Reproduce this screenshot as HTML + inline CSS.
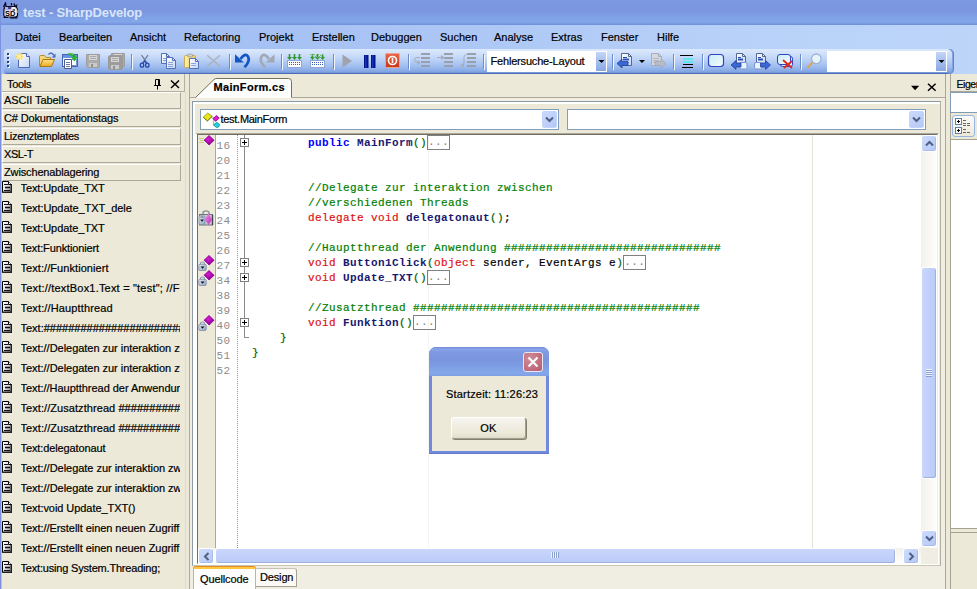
<!DOCTYPE html>
<html lang="de">
<head>
<meta charset="utf-8">
<title>test - SharpDevelop</title>
<style>
*{box-sizing:border-box;margin:0;padding:0}
html,body{width:977px;height:589px;overflow:hidden;background:#ECE9D8}
body{position:relative;font-family:"Liberation Sans",sans-serif;font-size:11px;color:#000;-webkit-text-stroke:.2px #000}
#title .cap,.ln,.cl b,.fm{-webkit-text-stroke:0}
.cl{-webkit-text-stroke:.2px #000}.cl .g{-webkit-text-stroke:.2px #008000}.cl .r{-webkit-text-stroke:.2px #E01010}.cl .p{-webkit-text-stroke:.2px #006400}
.abs{position:absolute}
#title{left:0;top:0;width:977px;height:25px;background:linear-gradient(#7C98E1 0,#7A96DF 45%,#7E9FE5 65%,#83A7EA 86%,#7A9AE2 94%,#6E8ED8 100%)}
#title .cap{left:23px;top:5px;font-weight:bold;font-size:13px;color:#D9E5F9;letter-spacing:-.16px;white-space:nowrap}
#menu{left:0;top:25px;width:977px;height:24px;background:linear-gradient(90deg,#9DB9F0 0,#A8C3F4 35%,#B8D1F8 75%,#BDD5F9 100%)}
#menu span{position:absolute;top:6px;white-space:nowrap;font-size:11px;letter-spacing:0}
#tbbg{left:0;top:49px;width:977px;height:25px;background:linear-gradient(90deg,#9DB9F0 0,#A8C3F4 35%,#B8D1F8 75%,#BDD5F9 100%)}
#tb{left:4px;top:49px;width:950px;height:25px;border-radius:4px 5px 5px 3px;box-shadow:inset -1px 0 0 #5E82CC,inset -2px 0 0 #86A6E2;background:linear-gradient(#DCE9FC 0,#CBDDF9 25%,#B6CEF5 48%,#9DBBEE 72%,#84A6E2 90%,#7396DA 95%,#4A6DBA 96%,#4A6DBA 100%)}
.lb{left:0;top:0;width:1px;height:589px;background:#7B91DB}
.lb2{left:1px;top:74px;width:1px;height:515px;background:#BCC2DD}
/* left panel */
#lp{left:2px;top:75px;width:183px;height:514px;background:#ECE9D8}
#lph{left:2px;top:74px;width:183px;height:18px;border:1px solid #B3B09F;border-left:0;border-top:0;background:#ECE9D8}
.sbtn{left:2px;width:179px;height:17px;background:#ECE9D8;border:1px solid;border-color:#FFFFFF #ACA899 #ACA899 #FFFFFF;font-size:11px;padding:1px 0 0 1px;white-space:nowrap}
.li{left:20.5px;white-space:nowrap;font-size:11px;letter-spacing:0;width:159.5px;overflow:hidden;height:14px;line-height:14px}
.lic{left:2px;width:10px;height:12px}

/* doc */
#docL{left:189px;top:74px;width:1px;height:515px;background:#ACA899}
#docR{left:945px;top:74px;width:1px;height:515px;background:#ACA899}
#docT{left:189px;top:97px;width:757px;height:1px;background:#ACA899}
#docbg{left:190px;top:98px;width:755px;height:491px;background:#F0EEE3}
#inner{left:192px;top:101px;width:749px;height:465px;border:1px solid;border-color:#8E9CA8 #B3B0A0 #C9C6B6 #8E9CA8;background:#ECE9D8;box-shadow:inset 1px 1px 0 1px #fff}
.combo{top:109px;height:21px;border:1px solid #7F9DB9;background:#fff}
.cbtn{top:1px;right:1px;width:15px;height:17px;border-radius:2px;background:linear-gradient(135deg,#CBDAFC,#B4C8F6);border:1px solid #C3D3FB}
#ed{left:195px;top:133px;width:744px;height:432px;border:1px solid;border-color:#ACA899 #fff #fff #fff;border-left-width:2px;background:#fff}
#ed2{left:197px;top:134px;width:741px;height:430px;border:1px solid;border-color:#716F64 #F1EFE2 #F1EFE2 #716F64;background:#fff;overflow:hidden}
#im{left:198px;top:135px;width:17px;height:413px;background:#ECE9D8}
#iml{left:215px;top:135px;width:1px;height:413px;background:#ACA899}
.ln{left:216.5px;font-family:"Liberation Mono",monospace;font-size:11px;letter-spacing:.4px;color:#8C8C8C;line-height:15px;height:15px;white-space:pre}
.cl{left:252px;font-family:"Liberation Mono",monospace;font-size:11px;letter-spacing:.4px;line-height:15px;height:15px;white-space:pre;color:#000}
.cl b{font-weight:bold}
.k{color:#0000FF}.n{color:#191970}.g{color:#008000}.p{color:#006400}.r{color:#E01010}
.fm{display:inline-block;border:1px solid #808080;color:#808080;height:15px;line-height:13px;vertical-align:top;margin-top:-1px;padding:0;letter-spacing:.4px}
.fb{left:240px;width:9px;height:9px;border:1px solid #808080;background:#fff}
.fb:before{content:"";position:absolute;left:1px;top:3px;width:5px;height:1px;background:#000}
.fb:after{content:"";position:absolute;left:3px;top:1px;width:1px;height:5px;background:#000}
.dia{width:10px;height:10px}

/* scrollbars */
.sbt{background:linear-gradient(90deg,#F3F1EC,#FEFEFB)}
.sbh{background:linear-gradient(#F3F1EC,#FEFEFB)}
.sbb{width:16px;height:16px;border-radius:3px;border:1px solid #fff;background:linear-gradient(135deg,#CFDBFD,#B5C8F4);box-shadow:inset -1px -1px 0 #A9BCEC}
.thumbh{background:linear-gradient(#C9D6FD,#BACBF8) !important}
.thumb{border-radius:3px;border:1px solid #fff;background:linear-gradient(90deg,#C9D6FD,#BACBF8);box-shadow:inset -1px -1px 0 #9FB2DE}
.btab{font-size:11px;white-space:nowrap}
/* right */
#rp .box{background:#fff;border:1px solid #7F9DB9}
/* dialog */
#dlg{left:429px;top:347px;width:120px;height:107px;border-radius:7px 7px 0 0;background:#728ADD;overflow:hidden;box-shadow:inset 0 -1px 0 #6379D0}
#dlgt{left:0;top:0;width:120px;height:29px;background:linear-gradient(#7089DB 0,#8AA4E8 2px,#7F9AE2 5px,#7A95DE 13px,#7E9EE4 20px,#84A7EA 26px,#7F9FE4 29px)}
#dlgb{left:3px;top:29px;width:114px;height:75px;background:#ECE9D8}
#dlgx{left:94px;top:5px;width:20px;height:20px;border-radius:3px;border:1px solid #E8E8F4;background:radial-gradient(circle at 30% 30%,#D08A96,#B85C6E)}
#ok{left:22px;top:70px;width:75px;height:22px;border-radius:3px;border:1px solid;border-color:#fff #A19E8E #A19E8E #fff;background:linear-gradient(#F6F5EF,#ECE9D8 75%,#E0DCCB);box-shadow:1px 1px 0 #84826F;text-align:center;line-height:20px;font-size:11px;letter-spacing:.2px}
</style>
</head>
<body>
<div id="title" class="abs"><svg class="abs" style="left:3px;top:2px" width="16" height="17" viewBox="0 0 16 17"><path d="M0.500 5L2.500 1L3 4M8.500 1V3.500M11 1.500L12 4.500L13.500 3.500L13 6" stroke="#0A0A20" stroke-width="1.300" fill="none"/><path d="M1 7.500Q1 4.500 4 4.500H11Q14.500 4.500 14.500 8.500V13Q14.500 15 12 15H3Q0.800 15 0.800 12.500Z" fill="#F6F5FA" stroke="#0A0A20" stroke-width="1.200"/><path d="M2 5H9.500L8 8.500H2Z" fill="#B2ABF0"/><path d="M5 6H8" stroke="#1A1A3A" stroke-width="1.400"/><path d="M12 6.500L14 8.500V11" stroke="#E8DCA0" stroke-width="1.200" fill="none"/><path d="M9.500 8H12" stroke="#111" stroke-width="1.200"/><text x="2" y="13.800" font-family="Liberation Sans,sans-serif" font-size="7.500" font-weight="bold" fill="#000" style="-webkit-text-stroke:0">SD</text><path d="M0.500 15.500H5M7 15.800H14.500" stroke="#05051A" stroke-width="1.200"/></svg><div class="cap abs">test - SharpDevelop</div></div>
<div id="menu" class="abs">
<span style="left:15px">Datei</span><span style="left:59px">Bearbeiten</span><span style="left:130px">Ansicht</span><span style="left:184px">Refactoring</span><span style="left:259px">Projekt</span><span style="left:312px">Erstellen</span><span style="left:371px">Debuggen</span><span style="left:440px">Suchen</span><span style="left:494px">Analyse</span><span style="left:551px">Extras</span><span style="left:601px">Fenster</span><span style="left:657px">Hilfe</span>
</div>
<div id="tbbg" class="abs"></div>
<div id="tb" class="abs"></div>
<svg class="abs" style="left:0;top:49px" width="977" height="25" viewBox="0 0 977 25"><defs><linearGradient id="pg" x1="0" y1="0" x2="1" y2="1"><stop offset="0" stop-color="#fff"/><stop offset="1" stop-color="#C5D7F7"/></linearGradient><linearGradient id="fo" x1="0" y1="0" x2="0" y2="1"><stop offset="0" stop-color="#FCE38A"/><stop offset="1" stop-color="#EFA91F"/></linearGradient><linearGradient id="cl" x1="0" y1="0" x2="1" y2="0"><stop offset="0" stop-color="#FFF3A6"/><stop offset="1" stop-color="#F1C850"/></linearGradient><linearGradient id="cb" x1="0" y1="0" x2="0" y2="1"><stop offset="0" stop-color="#C3D5F9"/><stop offset="1" stop-color="#89A8E2"/></linearGradient><linearGradient id="rr" x1="0" y1="0" x2="1" y2="1"><stop offset="0" stop-color="#C9EEF4"/><stop offset="1" stop-color="#F4FAFE"/></linearGradient><linearGradient id="st" x1="0" y1="0" x2="0" y2="1"><stop offset="0" stop-color="#E8694A"/><stop offset="1" stop-color="#C9351B"/></linearGradient></defs><rect x="8" y="5" width="2" height="2" fill="#fff"/><rect x="7" y="4" width="2" height="2" fill="#27408B"/><rect x="8" y="9" width="2" height="2" fill="#fff"/><rect x="7" y="8" width="2" height="2" fill="#27408B"/><rect x="8" y="13" width="2" height="2" fill="#fff"/><rect x="7" y="12" width="2" height="2" fill="#27408B"/><rect x="8" y="17" width="2" height="2" fill="#fff"/><rect x="7" y="16" width="2" height="2" fill="#27408B"/><path d="M18.5 4.5H26.5L29.5 7.5V18.5H18.5Z" fill="url(#pg)" stroke="#5268B0"/><path d="M26.5 4.5V7.5H29.5" fill="#E8EEFB" stroke="#5268B0"/><circle cx="19.600" cy="7.600" r="3.500" fill="#FBEB9A"/><path d="M19.500 3.800V11.400M15.800 7.500H23.400M16.900 4.900L22.300 10.300M22.300 4.900L16.900 10.300" stroke="#F3CF3E" stroke-width="1" stroke-dasharray="1.5 1"/><circle cx="19.600" cy="7.600" r="1.300" fill="#FFF9C8"/><path d="M39.5 17V7.5Q39.5 6.5 40.5 6.5H44.5L46 8.5H50.5V10" fill="#F6D674" stroke="#B98E2A"/><path d="M40 17.5L43 10.5H54.5L51.5 17.5Z" fill="url(#fo)" stroke="#A87612"/><path d="M48.5 5.5Q51.5 2.5 54 6.5" fill="none" stroke="#4668B8" stroke-width="1.3"/><path d="M55.5 4.5V8.5H51.8Z" fill="#4668B8"/><rect x="62.500" y="5.500" width="15" height="12" fill="#F2F6FD" stroke="#4464B8"/><rect x="63" y="6" width="14" height="3" fill="#6A92E6"/><rect x="70.500" y="10.500" width="6" height="6" fill="#fff" stroke="#5B78C0" stroke-width=".8"/><path d="M64.500 10.500H71.500V19.500H64.500Z" fill="#fff" stroke="#4A5C8C"/><path d="M66 13.500H70M66 15.500H70M66 17.500H70" stroke="#6676A6"/><path d="M68.500 5.500Q73.500 4 74.500 9" fill="none" stroke="#1FA81F" stroke-width="2.400"/><path d="M71 8H77.500L74.500 12.500Z" fill="#24B824"/><path d="M69 5Q72 4.200 73.500 6" fill="none" stroke="#7BE07B" stroke-width=".8"/><path d="M86.5 5.5H99.5V18.5H87.5L86.5 17.5Z" fill="#ABABAB" stroke="#9C9C9C"/><rect x="89" y="6" width="8" height="5" fill="#D6D6D6"/><path d="M90 7.5H96M90 9.5H96" stroke="#A8A8A8"/><rect x="89" y="14" width="8" height="4" fill="#C9C9C9"/><rect x="91" y="15" width="2" height="3" fill="#909090"/><path d="M111.5 4.5H124.5V17.5H112.5L111.5 16.5Z" fill="#ABABAB" stroke="#9C9C9C"/><rect x="114" y="5" width="8" height="5" fill="#D6D6D6"/><path d="M115 6.5H121M115 8.5H121" stroke="#A8A8A8"/><rect x="114" y="13" width="8" height="4" fill="#C9C9C9"/><rect x="116" y="14" width="2" height="3" fill="#909090"/><path d="M109.5 6.5H122.5V19.5H110.5L109.5 18.5Z" fill="#ABABAB" stroke="#9C9C9C"/><rect x="112" y="7" width="8" height="5" fill="#D6D6D6"/><path d="M113 8.5H119M113 10.5H119" stroke="#A8A8A8"/><rect x="112" y="15" width="8" height="4" fill="#C9C9C9"/><rect x="114" y="16" width="2" height="3" fill="#909090"/><g transform="translate(0,0)"><path d="M108.5 7.5H121.5V20.5H109.5L108.5 19.5Z" fill="#9C9C9C" stroke="#9A9A9A"/><rect x="111" y="8" width="8" height="5" fill="#D6D6D6"/><path d="M112 9.5H118M112 11.5H118" stroke="#A8A8A8"/><rect x="111" y="16" width="8" height="4" fill="#C9C9C9"/><rect x="113" y="17" width="2" height="3" fill="#909090"/></g><path d="M131.5 5V20" stroke="#6A8CCB"/><path d="M132.5 6V21" stroke="#F2F7FE"/><path d="M141.500 6L147 14.200M148 6L142.500 14.200" stroke="#66779A" stroke-width="1.200" fill="none"/><ellipse cx="142" cy="16.200" rx="1.700" ry="2" fill="none" stroke="#2648B0" stroke-width="1.300"/><ellipse cx="147.300" cy="16.200" rx="1.700" ry="2" fill="none" stroke="#2648B0" stroke-width="1.300"/><path d="M143 14.500L144.800 12L146.500 14.500" fill="none" stroke="#2648B0" stroke-width="1.200"/><path d="M161.5 4.5H166.5L169.5 7.5V14.5H161.5Z" fill="url(#pg)" stroke="#5670B8"/><path d="M166.5 4.5V7.5H169.5" fill="none" stroke="#5670B8"/><path d="M163 9.5H167" stroke="#8AA3DA"/><path d="M163 11.5H167" stroke="#8AA3DA"/><path d="M166.5 8.5H172.5L175.5 11.5V19.5H166.5Z" fill="url(#pg)" stroke="#5670B8"/><path d="M172.5 8.5V11.5H175.5" fill="none" stroke="#5670B8"/><path d="M168 13.5H173" stroke="#8AA3DA"/><path d="M168 15.5H173" stroke="#8AA3DA"/><path d="M168 17.5H173" stroke="#8AA3DA"/><rect x="184.500" y="6.500" width="11" height="12" rx="1" fill="url(#cl)" stroke="#C9A548" stroke-width=".9"/><rect x="187.500" y="5.200" width="5" height="2.600" rx=".8" fill="#D2D2D2" stroke="#9A9A9A" stroke-width=".8"/><path d="M189.5 9.5H195.5L198.5 12.5V19.5H189.5Z" fill="url(#pg)" stroke="#5670B8"/><path d="M195.5 9.5V12.5H198.5" fill="none" stroke="#5670B8"/><path d="M191 14.5H196" stroke="#8AA3DA"/><path d="M191 16.5H196" stroke="#8AA3DA"/><path d="M207.200 6.200L220 17.400M220 6.200L207.200 17.400" stroke="#ADB2BF" stroke-width="1.500" fill="none"/><path d="M229.5 5V20" stroke="#6A8CCB"/><path d="M230.5 6V21" stroke="#F2F7FE"/><path d="M240.500 10Q245 3.500 248 7.500Q250.500 12 244.500 18.300" fill="none" stroke="#1556C6" stroke-width="2.700"/><path d="M235 5.300V13.500H243.800Z" fill="#1556C6"/><path d="M269 10Q264.500 3.500 261.500 7.500Q259 12 265 18.300" fill="none" stroke="#A3A8B5" stroke-width="2.700"/><path d="M274.500 5.300V13.500H265.700Z" fill="#A3A8B5"/><path d="M281.5 5V20" stroke="#6A8CCB"/><path d="M282.5 6V21" stroke="#F2F7FE"/><rect x="287.5" y="11.5" width="14" height="7" fill="#fff" stroke="#8FA6D8"/><rect x="289" y="13" width="1" height="1" fill="#3A59B0"/><rect x="289" y="15" width="1" height="1" fill="#3A59B0"/><rect x="291" y="13" width="1" height="1" fill="#3A59B0"/><rect x="291" y="15" width="1" height="1" fill="#3A59B0"/><rect x="293" y="13" width="1" height="1" fill="#3A59B0"/><rect x="293" y="15" width="1" height="1" fill="#3A59B0"/><rect x="295" y="13" width="1" height="1" fill="#3A59B0"/><rect x="295" y="15" width="1" height="1" fill="#3A59B0"/><rect x="297" y="13" width="1" height="1" fill="#3A59B0"/><rect x="297" y="15" width="1" height="1" fill="#3A59B0"/><rect x="299" y="13" width="1" height="1" fill="#3A59B0"/><rect x="299" y="15" width="1" height="1" fill="#3A59B0"/><path d="M289.5 5V8" stroke="#2E9A2E" stroke-width="1.6"/><path d="M287 8H292L289.5 11Z" fill="#2E9A2E"/><path d="M294.5 5V8" stroke="#2E9A2E" stroke-width="1.6"/><path d="M292 8H297L294.5 11Z" fill="#2E9A2E"/><path d="M299.5 5V8" stroke="#2E9A2E" stroke-width="1.6"/><path d="M297 8H302L299.5 11Z" fill="#2E9A2E"/><rect x="310.5" y="11.5" width="14" height="7" fill="#fff" stroke="#8FA6D8"/><rect x="312" y="13" width="1" height="1" fill="#3A59B0"/><rect x="312" y="15" width="1" height="1" fill="#3A59B0"/><rect x="314" y="13" width="1" height="1" fill="#3A59B0"/><rect x="314" y="15" width="1" height="1" fill="#3A59B0"/><rect x="316" y="13" width="1" height="1" fill="#3A59B0"/><rect x="316" y="15" width="1" height="1" fill="#3A59B0"/><rect x="318" y="13" width="1" height="1" fill="#3A59B0"/><rect x="318" y="15" width="1" height="1" fill="#3A59B0"/><rect x="320" y="13" width="1" height="1" fill="#3A59B0"/><rect x="320" y="15" width="1" height="1" fill="#3A59B0"/><rect x="322" y="13" width="1" height="1" fill="#3A59B0"/><rect x="322" y="15" width="1" height="1" fill="#3A59B0"/><path d="M312.5 5V8" stroke="#2E9A2E" stroke-width="1.6"/><path d="M310 8H315L312.5 11Z" fill="#2E9A2E"/><path d="M317.5 5V8" stroke="#2E9A2E" stroke-width="1.6"/><path d="M315 8H320L317.5 11Z" fill="#2E9A2E"/><path d="M322.5 5V8" stroke="#2E9A2E" stroke-width="1.6"/><path d="M320 8H325L322.5 11Z" fill="#2E9A2E"/><rect x="310" y="5" width="1" height="1" fill="#6FB56F"/><rect x="311" y="7" width="1" height="1" fill="#6FB56F"/><rect x="312" y="6" width="1" height="1" fill="#6FB56F"/><rect x="313" y="8" width="1" height="1" fill="#6FB56F"/><rect x="314" y="5" width="1" height="1" fill="#6FB56F"/><rect x="315" y="7" width="1" height="1" fill="#6FB56F"/><rect x="316" y="6" width="1" height="1" fill="#6FB56F"/><rect x="317" y="8" width="1" height="1" fill="#6FB56F"/><rect x="318" y="5" width="1" height="1" fill="#6FB56F"/><rect x="319" y="7" width="1" height="1" fill="#6FB56F"/><rect x="320" y="6" width="1" height="1" fill="#6FB56F"/><rect x="321" y="8" width="1" height="1" fill="#6FB56F"/><rect x="322" y="5" width="1" height="1" fill="#6FB56F"/><rect x="323" y="7" width="1" height="1" fill="#6FB56F"/><path d="M333.5 5V20" stroke="#6A8CCB"/><path d="M334.5 6V21" stroke="#F2F7FE"/><path d="M342.500 5.500L352 12L342.500 18.500Z" fill="#9FA3AE"/><rect x="364" y="6" width="4.500" height="13" fill="#00168C"/><rect x="371" y="6" width="4.500" height="13" fill="#00168C"/><rect x="365" y="6" width="1.500" height="13" fill="#1A34B8"/><rect x="372" y="6" width="1.500" height="13" fill="#1A34B8"/><rect x="385.500" y="4.500" width="14" height="14" rx="1" fill="url(#st)" stroke="#F0A08A"/><circle cx="392.500" cy="11.500" r="4" fill="none" stroke="#fff" stroke-width="1.600"/><rect x="391.700" y="9" width="1.600" height="5" fill="#fff"/><path d="M408.5 5V20" stroke="#6A8CCB"/><path d="M409.5 6V21" stroke="#F2F7FE"/><rect x="421" y="4" width="9" height="2" fill="#9A9FAD"/><rect x="421" y="8" width="9" height="2" fill="#9A9FAD"/><rect x="421" y="12" width="9" height="2" fill="#9A9FAD"/><rect x="421" y="16" width="9" height="2" fill="#9A9FAD"/><path d="M420 8.500H417Q414.500 8.500 414.500 11Q414.500 13.500 418 13.500" fill="none" stroke="#A6ABB8"/><path d="M417.500 11L420.500 13.500L417.500 16Z" fill="#A6ABB8"/><rect x="444" y="4" width="9" height="2" fill="#9A9FAD"/><rect x="444" y="8" width="9" height="2" fill="#9A9FAD"/><rect x="444" y="12" width="9" height="2" fill="#9A9FAD"/><rect x="444" y="16" width="9" height="2" fill="#9A9FAD"/><path d="M437 8.500H446" stroke="#A6ABB8"/><path d="M441 6L444.500 8.500L441 11Z" fill="#A6ABB8"/><rect x="467" y="4" width="9" height="2" fill="#9A9FAD"/><rect x="467" y="8" width="9" height="2" fill="#9A9FAD"/><rect x="467" y="12" width="9" height="2" fill="#9A9FAD"/><rect x="467" y="16" width="9" height="2" fill="#9A9FAD"/><path d="M466.500 5.500Q463.500 5.500 464 10.500Q464.500 16.500 462 16.500" fill="none" stroke="#A6ABB8"/><path d="M463.500 14L460.500 16.500L463.500 19Z" fill="#A6ABB8"/><path d="M483.5 5V20" stroke="#6A8CCB"/><path d="M484.5 6V21" stroke="#F2F7FE"/><rect x="487" y="2" width="120" height="21" fill="#fff"/><rect x="596" y="3" width="10" height="19" fill="url(#cb)"/><path d="M598.500 11H604.500L601.500 14Z" fill="#000"/><path d="M612.5 5V20" stroke="#6A8CCB"/><path d="M613.5 6V21" stroke="#F2F7FE"/><path d="M621.5 4.5H628.5L631.5 7.5V16.5H621.5Z" fill="url(#pg)" stroke="#56678F"/><path d="M628.5 4.5V7.5H631.5" fill="none" stroke="#56678F"/><path d="M623 9.5H629" stroke="#8AA3DA"/><path d="M623 11.5H629" stroke="#8AA3DA"/><path d="M623 13.5H629" stroke="#8AA3DA"/><path d="M623 8.500H627M623 10.500H629" stroke="#2B4EB5"/><path d="M617 14.500L622 10V12.500H628V16.500H622V19Z" fill="#3B66D6" stroke="#24449C" stroke-width=".8"/><path d="M639 11H645L642 14Z" fill="#000"/><path d="M651.5 4.5H658.5L661.5 7.5V16.5H651.5Z" fill="#D5D8E0" stroke="#A9ACB6"/><path d="M658.5 4.5V7.5H661.5" fill="none" stroke="#A9ACB6"/><path d="M653 9.5H659" stroke="#B5B8C2"/><path d="M653 11.5H659" stroke="#B5B8C2"/><path d="M653 13.5H659" stroke="#B5B8C2"/><path d="M666 14.500L661 10V12.500H655V16.500H661V19Z" fill="#B9BCC6" stroke="#A3A6B0" stroke-width=".8"/><path d="M673.5 5V20" stroke="#6A8CCB"/><path d="M674.5 6V21" stroke="#F2F7FE"/><path d="M680 6.500H693" stroke="#000" stroke-width="1"/><rect x="683" y="9" width="10" height="2" fill="#62E6EE"/><rect x="683" y="12" width="10" height="2" fill="#62E6EE"/><path d="M683 15.500H693M682 18.500H693" stroke="#000" stroke-width="1.2"/><path d="M702.5 5V20" stroke="#6A8CCB"/><path d="M703.5 6V21" stroke="#F2F7FE"/><rect x="708.500" y="5.500" width="15" height="12" rx="3" fill="url(#rr)" stroke="#2F44C4" stroke-width="1.200"/><path d="M736.5 4.5H742.5L745.5 7.5V14.5H736.5Z" fill="url(#pg)" stroke="#56678F"/><path d="M742.5 4.5V7.5H745.5" fill="none" stroke="#56678F"/><path d="M738 9.5H743" stroke="#8AA3DA"/><path d="M738 11.5H743" stroke="#8AA3DA"/><path d="M738 8.500H741M738 10.500H743" stroke="#2B4EB5"/><rect x="739.500" y="13.500" width="7.500" height="6.500" rx="1.500" fill="#E6F4FA" stroke="#7C93D0"/><path d="M731 16L736 11.500V14H741V18H736V20.500Z" fill="#3B66D6" stroke="#24449C" stroke-width=".8"/><path d="M756.5 4.5H762.5L765.5 7.5V14.5H756.5Z" fill="url(#pg)" stroke="#56678F"/><path d="M762.5 4.5V7.5H765.5" fill="none" stroke="#56678F"/><path d="M758 9.5H763" stroke="#8AA3DA"/><path d="M758 11.5H763" stroke="#8AA3DA"/><path d="M758 8.500H761M758 10.500H763" stroke="#2B4EB5"/><rect x="754.500" y="13.500" width="7.500" height="6.500" rx="1.500" fill="#E6F4FA" stroke="#7C93D0"/><path d="M770.500 16L765.500 11.500V14H760.500V18H765.500V20.500Z" fill="#3B66D6" stroke="#24449C" stroke-width=".8"/><rect x="780.500" y="7.500" width="12" height="10" rx="2" fill="#DCEBFA" stroke="#2F44C4"/><rect x="777.500" y="5.500" width="13" height="10" rx="2.500" fill="url(#rr)" stroke="#2F44C4"/><path d="M783 11L792 19M792 12L784 19" stroke="#E0281C" stroke-width="1.800" fill="none"/><path d="M800.5 5V20" stroke="#6A8CCB"/><path d="M801.5 6V21" stroke="#F2F7FE"/><circle cx="816.300" cy="9.800" r="4.800" fill="#E6F5FB" stroke="#9DB2D6" stroke-width="1.300"/><path d="M812.600 13.500L807.200 19" stroke="#DDA45E" stroke-width="2"/><rect x="827" y="2" width="120" height="21" fill="#fff"/><rect x="936" y="3" width="10" height="19" fill="url(#cb)"/><path d="M938.500 11H944.500L941.500 14Z" fill="#000"/></svg>
<div class="abs" style="left:490.5px;top:55px;font-size:11px;white-space:nowrap;letter-spacing:-.18px">Fehlersuche-Layout</div>
<div class="lb abs"></div><div class="lb2 abs"></div>
<div id="left">
<div id="lph" class="abs"><span class="abs" style="left:5px;top:4px;font-size:11px;letter-spacing:-.3px">Tools</span><svg class="abs" style="left:152px;top:5px" width="8" height="11" viewBox="0 0 8 11"><path d="M1.5 0.5H5.5V6.5H1.5Z M4.5 0.5V6.5 M0 6.5H7 M3.5 7V10.5" fill="none" stroke="#000" stroke-width="1"/></svg><svg class="abs" style="left:168px;top:6px" width="10" height="9" viewBox="0 0 10 9"><path d="M1 0.500L9 8M9 0.500L1 8" stroke="#000" stroke-width="1.500" fill="none"/></svg></div>
<div class="sbtn abs" style="top:92px;letter-spacing:-0.085px">ASCII Tabelle</div>
<div class="sbtn abs" style="top:110px;letter-spacing:-0.15px">C# Dokumentationstags</div>
<div class="sbtn abs" style="top:128px;letter-spacing:-0.3px">Lizenztemplates</div>
<div class="sbtn abs" style="top:146px;letter-spacing:-0.4px">XSL-T</div>
<div class="sbtn abs" style="top:164px;letter-spacing:-0.14px">Zwischenablagering</div>
<svg class="lic abs" style="top:181px" viewBox="0 0 10 12"><path d="M0.5 0.5H6.5L9.5 3.5V11.5H0.5Z" fill="url(#ig)" stroke="#000"/><path d="M6.5 0.5V3.5H9.5" fill="#fff" stroke="#000"/><path d="M9.2 4V11.2H1" fill="none" stroke="#222" stroke-width="1.4"/><path d="M2 3.5H6M2 9.5H8" stroke="#111"/><path d="M3 6.5H8" stroke="#111" stroke-width="1.6"/></svg>
<div class="li abs" style="top:181px;letter-spacing:-0.093px">Text:Update_TXT</div>
<svg class="lic abs" style="top:201px" viewBox="0 0 10 12"><path d="M0.5 0.5H6.5L9.5 3.5V11.5H0.5Z" fill="url(#ig)" stroke="#000"/><path d="M6.5 0.5V3.5H9.5" fill="#fff" stroke="#000"/><path d="M9.2 4V11.2H1" fill="none" stroke="#222" stroke-width="1.4"/><path d="M2 3.5H6M2 9.5H8" stroke="#111"/><path d="M3 6.5H8" stroke="#111" stroke-width="1.6"/></svg>
<div class="li abs" style="top:201px;letter-spacing:-0.061px">Text:Update_TXT_dele</div>
<svg class="lic abs" style="top:221px" viewBox="0 0 10 12"><path d="M0.5 0.5H6.5L9.5 3.5V11.5H0.5Z" fill="url(#ig)" stroke="#000"/><path d="M6.5 0.5V3.5H9.5" fill="#fff" stroke="#000"/><path d="M9.2 4V11.2H1" fill="none" stroke="#222" stroke-width="1.4"/><path d="M2 3.5H6M2 9.5H8" stroke="#111"/><path d="M3 6.5H8" stroke="#111" stroke-width="1.6"/></svg>
<div class="li abs" style="top:221px;letter-spacing:-0.093px">Text:Update_TXT</div>
<svg class="lic abs" style="top:241px" viewBox="0 0 10 12"><path d="M0.5 0.5H6.5L9.5 3.5V11.5H0.5Z" fill="url(#ig)" stroke="#000"/><path d="M6.5 0.5V3.5H9.5" fill="#fff" stroke="#000"/><path d="M9.2 4V11.2H1" fill="none" stroke="#222" stroke-width="1.4"/><path d="M2 3.5H6M2 9.5H8" stroke="#111"/><path d="M3 6.5H8" stroke="#111" stroke-width="1.6"/></svg>
<div class="li abs" style="top:241px;letter-spacing:-0.13px">Text:Funktioniert</div>
<svg class="lic abs" style="top:261px" viewBox="0 0 10 12"><path d="M0.5 0.5H6.5L9.5 3.5V11.5H0.5Z" fill="url(#ig)" stroke="#000"/><path d="M6.5 0.5V3.5H9.5" fill="#fff" stroke="#000"/><path d="M9.2 4V11.2H1" fill="none" stroke="#222" stroke-width="1.4"/><path d="M2 3.5H6M2 9.5H8" stroke="#111"/><path d="M3 6.5H8" stroke="#111" stroke-width="1.6"/></svg>
<div class="li abs" style="top:261px;letter-spacing:0.067px">Text://Funktioniert</div>
<svg class="lic abs" style="top:281px" viewBox="0 0 10 12"><path d="M0.5 0.5H6.5L9.5 3.5V11.5H0.5Z" fill="url(#ig)" stroke="#000"/><path d="M6.5 0.5V3.5H9.5" fill="#fff" stroke="#000"/><path d="M9.2 4V11.2H1" fill="none" stroke="#222" stroke-width="1.4"/><path d="M2 3.5H6M2 9.5H8" stroke="#111"/><path d="M3 6.5H8" stroke="#111" stroke-width="1.6"/></svg>
<div class="li abs" style="top:281px;letter-spacing:0.2px">Text://textBox1.Text = "test"; //Funktioniert</div>
<svg class="lic abs" style="top:301px" viewBox="0 0 10 12"><path d="M0.5 0.5H6.5L9.5 3.5V11.5H0.5Z" fill="url(#ig)" stroke="#000"/><path d="M6.5 0.5V3.5H9.5" fill="#fff" stroke="#000"/><path d="M9.2 4V11.2H1" fill="none" stroke="#222" stroke-width="1.4"/><path d="M2 3.5H6M2 9.5H8" stroke="#111"/><path d="M3 6.5H8" stroke="#111" stroke-width="1.6"/></svg>
<div class="li abs" style="top:301px;letter-spacing:0.128px">Text://Hauptthread</div>
<svg class="lic abs" style="top:321px" viewBox="0 0 10 12"><path d="M0.5 0.5H6.5L9.5 3.5V11.5H0.5Z" fill="url(#ig)" stroke="#000"/><path d="M6.5 0.5V3.5H9.5" fill="#fff" stroke="#000"/><path d="M9.2 4V11.2H1" fill="none" stroke="#222" stroke-width="1.4"/><path d="M2 3.5H6M2 9.5H8" stroke="#111"/><path d="M3 6.5H8" stroke="#111" stroke-width="1.6"/></svg>
<div class="li abs" style="top:321px;letter-spacing:0px">Text:##############################</div>
<svg class="lic abs" style="top:341px" viewBox="0 0 10 12"><path d="M0.5 0.5H6.5L9.5 3.5V11.5H0.5Z" fill="url(#ig)" stroke="#000"/><path d="M6.5 0.5V3.5H9.5" fill="#fff" stroke="#000"/><path d="M9.2 4V11.2H1" fill="none" stroke="#222" stroke-width="1.4"/><path d="M2 3.5H6M2 9.5H8" stroke="#111"/><path d="M3 6.5H8" stroke="#111" stroke-width="1.6"/></svg>
<div class="li abs" style="top:341px;letter-spacing:-0.03px">Text://Delegaten zur interaktion zwischen</div>
<svg class="lic abs" style="top:361px" viewBox="0 0 10 12"><path d="M0.5 0.5H6.5L9.5 3.5V11.5H0.5Z" fill="url(#ig)" stroke="#000"/><path d="M6.5 0.5V3.5H9.5" fill="#fff" stroke="#000"/><path d="M9.2 4V11.2H1" fill="none" stroke="#222" stroke-width="1.4"/><path d="M2 3.5H6M2 9.5H8" stroke="#111"/><path d="M3 6.5H8" stroke="#111" stroke-width="1.6"/></svg>
<div class="li abs" style="top:361px;letter-spacing:-0.03px">Text://Delegaten zur interaktion zwischen</div>
<svg class="lic abs" style="top:381px" viewBox="0 0 10 12"><path d="M0.5 0.5H6.5L9.5 3.5V11.5H0.5Z" fill="url(#ig)" stroke="#000"/><path d="M6.5 0.5V3.5H9.5" fill="#fff" stroke="#000"/><path d="M9.2 4V11.2H1" fill="none" stroke="#222" stroke-width="1.4"/><path d="M2 3.5H6M2 9.5H8" stroke="#111"/><path d="M3 6.5H8" stroke="#111" stroke-width="1.6"/></svg>
<div class="li abs" style="top:381px;letter-spacing:-0.036px">Text://Hauptthread der Anwendung</div>
<svg class="lic abs" style="top:401px" viewBox="0 0 10 12"><path d="M0.5 0.5H6.5L9.5 3.5V11.5H0.5Z" fill="url(#ig)" stroke="#000"/><path d="M6.5 0.5V3.5H9.5" fill="#fff" stroke="#000"/><path d="M9.2 4V11.2H1" fill="none" stroke="#222" stroke-width="1.4"/><path d="M2 3.5H6M2 9.5H8" stroke="#111"/><path d="M3 6.5H8" stroke="#111" stroke-width="1.6"/></svg>
<div class="li abs" style="top:401px;letter-spacing:0.064px">Text://Zusatzthread ##############</div>
<svg class="lic abs" style="top:421px" viewBox="0 0 10 12"><path d="M0.5 0.5H6.5L9.5 3.5V11.5H0.5Z" fill="url(#ig)" stroke="#000"/><path d="M6.5 0.5V3.5H9.5" fill="#fff" stroke="#000"/><path d="M9.2 4V11.2H1" fill="none" stroke="#222" stroke-width="1.4"/><path d="M2 3.5H6M2 9.5H8" stroke="#111"/><path d="M3 6.5H8" stroke="#111" stroke-width="1.6"/></svg>
<div class="li abs" style="top:421px;letter-spacing:0.064px">Text://Zusatzthread ##############</div>
<svg class="lic abs" style="top:441px" viewBox="0 0 10 12"><path d="M0.5 0.5H6.5L9.5 3.5V11.5H0.5Z" fill="url(#ig)" stroke="#000"/><path d="M6.5 0.5V3.5H9.5" fill="#fff" stroke="#000"/><path d="M9.2 4V11.2H1" fill="none" stroke="#222" stroke-width="1.4"/><path d="M2 3.5H6M2 9.5H8" stroke="#111"/><path d="M3 6.5H8" stroke="#111" stroke-width="1.6"/></svg>
<div class="li abs" style="top:441px;letter-spacing:-0.109px">Text:delegatonaut</div>
<svg class="lic abs" style="top:461px" viewBox="0 0 10 12"><path d="M0.5 0.5H6.5L9.5 3.5V11.5H0.5Z" fill="url(#ig)" stroke="#000"/><path d="M6.5 0.5V3.5H9.5" fill="#fff" stroke="#000"/><path d="M9.2 4V11.2H1" fill="none" stroke="#222" stroke-width="1.4"/><path d="M2 3.5H6M2 9.5H8" stroke="#111"/><path d="M3 6.5H8" stroke="#111" stroke-width="1.6"/></svg>
<div class="li abs" style="top:461px;letter-spacing:-0.03px">Text://Delegate zur interaktion zwischen</div>
<svg class="lic abs" style="top:481px" viewBox="0 0 10 12"><path d="M0.5 0.5H6.5L9.5 3.5V11.5H0.5Z" fill="url(#ig)" stroke="#000"/><path d="M6.5 0.5V3.5H9.5" fill="#fff" stroke="#000"/><path d="M9.2 4V11.2H1" fill="none" stroke="#222" stroke-width="1.4"/><path d="M2 3.5H6M2 9.5H8" stroke="#111"/><path d="M3 6.5H8" stroke="#111" stroke-width="1.6"/></svg>
<div class="li abs" style="top:481px;letter-spacing:-0.03px">Text://Delegate zur interaktion zwischen</div>
<svg class="lic abs" style="top:501px" viewBox="0 0 10 12"><path d="M0.5 0.5H6.5L9.5 3.5V11.5H0.5Z" fill="url(#ig)" stroke="#000"/><path d="M6.5 0.5V3.5H9.5" fill="#fff" stroke="#000"/><path d="M9.2 4V11.2H1" fill="none" stroke="#222" stroke-width="1.4"/><path d="M2 3.5H6M2 9.5H8" stroke="#111"/><path d="M3 6.5H8" stroke="#111" stroke-width="1.6"/></svg>
<div class="li abs" style="top:501px;letter-spacing:-0.062px">Text:void Update_TXT()</div>
<svg class="lic abs" style="top:521px" viewBox="0 0 10 12"><path d="M0.5 0.5H6.5L9.5 3.5V11.5H0.5Z" fill="url(#ig)" stroke="#000"/><path d="M6.5 0.5V3.5H9.5" fill="#fff" stroke="#000"/><path d="M9.2 4V11.2H1" fill="none" stroke="#222" stroke-width="1.4"/><path d="M2 3.5H6M2 9.5H8" stroke="#111"/><path d="M3 6.5H8" stroke="#111" stroke-width="1.6"/></svg>
<div class="li abs" style="top:521px;letter-spacing:-0.052px">Text://Erstellt einen neuen Zugriff</div>
<svg class="lic abs" style="top:541px" viewBox="0 0 10 12"><path d="M0.5 0.5H6.5L9.5 3.5V11.5H0.5Z" fill="url(#ig)" stroke="#000"/><path d="M6.5 0.5V3.5H9.5" fill="#fff" stroke="#000"/><path d="M9.2 4V11.2H1" fill="none" stroke="#222" stroke-width="1.4"/><path d="M2 3.5H6M2 9.5H8" stroke="#111"/><path d="M3 6.5H8" stroke="#111" stroke-width="1.6"/></svg>
<div class="li abs" style="top:541px;letter-spacing:-0.052px">Text://Erstellt einen neuen Zugriff</div>
<svg class="lic abs" style="top:561px" viewBox="0 0 10 12"><path d="M0.5 0.5H6.5L9.5 3.5V11.5H0.5Z" fill="url(#ig)" stroke="#000"/><path d="M6.5 0.5V3.5H9.5" fill="#fff" stroke="#000"/><path d="M9.2 4V11.2H1" fill="none" stroke="#222" stroke-width="1.4"/><path d="M2 3.5H6M2 9.5H8" stroke="#111"/><path d="M3 6.5H8" stroke="#111" stroke-width="1.6"/></svg>
<div class="li abs" style="top:561px;letter-spacing:-0.19px">Text:using System.Threading;</div>
</div>
<div id="doc">
<div class="abs" style="left:185px;top:92px;width:1px;height:497px;background:#DEDBCB"></div><div id="docbg" class="abs"></div><div id="docL" class="abs"></div><div id="docR" class="abs"></div><div id="docT" class="abs"></div>
<svg class="abs" style="left:189px;top:76px" width="110" height="24" viewBox="0 0 110 24"><path d="M6.5 22 L25 3.5 Q26 2.5 28 2.5 H99.5 Q102.5 2.5 102.5 5.5 V22 " fill="#FDFDFB" stroke="none"/><path d="M6.5 21.5 L25 3.5 Q26 2.5 28 2.5 H99.5 Q102.5 2.5 102.5 5.5 V21.5" fill="none" stroke="#74715F" stroke-width="1"/></svg>
<div class="abs" style="left:213.5px;top:80.5px;font-weight:bold;font-size:11px;white-space:nowrap;letter-spacing:.32px">MainForm.cs</div>
<svg class="abs" style="left:910px;top:85px" width="10" height="6" viewBox="0 0 10 6"><path d="M1 0.800H9.200L5.100 5.200Z" fill="#000"/></svg>
<svg class="abs" style="left:927px;top:83px" width="10" height="9" viewBox="0 0 10 9"><path d="M1 0.800L8.600 7.800M8.600 0.800L1 7.800" stroke="#000" stroke-width="1.500" fill="none"/></svg>
<div id="inner" class="abs"></div>
<div class="combo abs" style="left:200px;width:359px"><svg class="abs" style="left:2px;top:2px" width="18" height="17" viewBox="0 0 18 17"><path d="M10.500 6V12.500H13" fill="none" stroke="#B8B8B8" stroke-width="1.300"/><path d="M9 6H12" stroke="#B8B8B8" stroke-width="1.300"/><path d="M0.300 5.200L4.600 1L9.300 4.300L4.300 9Z" fill="#E6E61E" stroke="#8E8E10" stroke-width=".8"/><path d="M0.300 5.200L4.300 9L9.300 4.300" fill="none" stroke="#7A7A0C" stroke-width=".9"/><path d="M10 6.500L13.600 3.500L16.300 6L12.600 9.400Z" fill="#E018D0" stroke="#8A0A86" stroke-width=".8"/><path d="M10.500 13L13.800 10.300L16.600 12.400Q16.300 15.600 13.500 15.600Z" fill="#20D4DC" stroke="#0C8A92" stroke-width=".8"/></svg><span class="abs" style="left:19.5px;top:3px;white-space:nowrap;letter-spacing:-.28px">test.MainForm</span><div class="cbtn abs"><svg class="abs" style="left:2px;top:4px" width="9" height="7" viewBox="0 0 9 7"><path d="M1 1.5L4.5 5L8 1.5" fill="none" stroke="#4D6185" stroke-width="2"/></svg></div></div>
<div class="combo abs" style="left:567px;width:359px"><div class="cbtn abs"><svg class="abs" style="left:2px;top:4px" width="9" height="7" viewBox="0 0 9 7"><path d="M1 1.5L4.5 5L8 1.5" fill="none" stroke="#4D6185" stroke-width="2"/></svg></div></div>
<div id="ed" class="abs"></div><div id="ed2" class="abs"></div><div id="im" class="abs"></div><div id="iml" class="abs"></div>
<div class="abs" style="left:237px;top:135px;width:1px;height:413px;background:repeating-linear-gradient(#9A9A9A 0 1px,#fff 1px 2px)"></div>
<div class="abs" style="left:244px;top:135px;width:1px;height:203px;background:#8A8A8A"></div><div class="abs" style="left:244px;top:337px;width:5px;height:1px;background:#8A8A8A"></div>
<div class="abs" style="left:812px;top:135px;width:1px;height:413px;background:#E4E2DA"></div><div class="abs" style="left:428px;top:135px;width:1px;height:413px;background:repeating-linear-gradient(#ECECE4 0 1px,#fff 1px 2px)"></div>
<div class="ln abs" style="top:138.5px">16</div>
<div class="cl abs" style="top:135.5px">        <b class="k">public</b> <b class="n">MainForm</b><span class="p">()</span><span class="fm">...</span></div>
<div class="fb abs" style="top:138px"></div>
<div class="ln abs" style="top:153.5px">20</div>
<div class="ln abs" style="top:168.5px">21</div>
<div class="ln abs" style="top:183.5px">22</div>
<div class="cl abs" style="top:180.5px">        <span class="g">//Delegate zur interaktion zwischen</span></div>
<div class="ln abs" style="top:198.5px">23</div>
<div class="cl abs" style="top:195.5px">        <span class="g">//verschiedenen Threads</span></div>
<div class="ln abs" style="top:213.5px">24</div>
<div class="cl abs" style="top:210.5px">        <span class="r">delegate void</span> <b class="n">delegatonaut</b><span class="p">()</span>;</div>
<div class="ln abs" style="top:228.5px">25</div>
<div class="ln abs" style="top:243.5px">26</div>
<div class="cl abs" style="top:240.5px">        <span class="g">//Hauptthread der Anwendung ###############################</span></div>
<div class="ln abs" style="top:258.5px">27</div>
<div class="cl abs" style="top:255.5px">        <span class="r">void</span> <b class="n">Button1Click</b><span class="p">(</span><span class="r">object</span> sender, EventArgs e<span class="p">)</span><span class="fm">...</span></div>
<div class="fb abs" style="top:258px"></div>
<div class="ln abs" style="top:273.5px">34</div>
<div class="cl abs" style="top:270.5px">        <span class="r">void</span> <b class="n">Update_TXT</b><span class="p">()</span><span class="fm">...</span></div>
<div class="fb abs" style="top:273px"></div>
<div class="ln abs" style="top:288.5px">38</div>
<div class="ln abs" style="top:303.5px">39</div>
<div class="cl abs" style="top:300.5px">        <span class="g">//Zusatzthread #########################################</span></div>
<div class="ln abs" style="top:318.5px">40</div>
<div class="cl abs" style="top:315.5px">        <span class="r">void</span> <b class="n">Funktion</b><span class="p">()</span><span class="fm">...</span></div>
<div class="fb abs" style="top:318px"></div>
<div class="ln abs" style="top:333.5px">50</div>
<div class="cl abs" style="top:330.5px">    <span class="p">}</span></div>
<div class="ln abs" style="top:348.5px">51</div>
<div class="cl abs" style="top:345.5px"><span class="p">}</span></div>
<div class="ln abs" style="top:363.5px">52</div>
<div class="abs sbt" style="left:921px;top:135px;width:16px;height:413px"></div>
<div class="abs sbb" style="left:921px;top:135px;height:17px"><svg class="abs" style="left:3px;top:4px" width="9" height="7" viewBox="0 0 9 7"><path d="M1 5.5L4.5 2L8 5.5" fill="none" stroke="#4D6185" stroke-width="2"/></svg></div>
<div class="abs sbb" style="left:921px;top:530px;height:17px"><svg class="abs" style="left:3px;top:4px" width="9" height="7" viewBox="0 0 9 7"><path d="M1 1.5L4.5 5L8 1.5" fill="none" stroke="#4D6185" stroke-width="2"/></svg></div>
<div class="abs thumb" style="left:921px;top:267px;width:16px;height:212px"><div class="abs" style="left:4px;top:101px;width:6px;height:8px;background:repeating-linear-gradient(#EEF4FE 0 1px,#8CA0CC 1px 2px)"></div></div>
<div class="abs sbh" style="left:198px;top:548px;width:723px;height:16px"></div>
<div class="abs sbb" style="left:198px;top:548px"><svg class="abs" style="left:4px;top:3px" width="7" height="9" viewBox="0 0 7 9"><path d="M5.5 1L2 4.5L5.5 8" fill="none" stroke="#4D6185" stroke-width="2"/></svg></div>
<div class="abs sbb" style="left:903px;top:548px"><svg class="abs" style="left:4px;top:3px" width="7" height="9" viewBox="0 0 7 9"><path d="M1.5 1L5 4.5L1.5 8" fill="none" stroke="#4D6185" stroke-width="2"/></svg></div>
<div class="abs thumb thumbh" style="left:215px;top:548px;width:681px;height:16px"><div class="abs" style="left:335px;top:3px;width:8px;height:6px;background:repeating-linear-gradient(90deg,#EEF4FE 0 1px,#8CA0CC 1px 2px)"></div></div>
<div class="abs" style="left:921px;top:548px;width:17px;height:16px;background:#F0EEE2"></div>
<div class="abs" style="left:193px;top:566px;width:63px;height:23px;background:#FDFDFB;border:1px solid #B9B6A6;border-bottom:0;border-radius:3px 3px 0 0"></div>
<div class="abs" style="left:193px;top:566px;width:63px;height:3px;background:#FFC73C;border-radius:3px 3px 0 0;border-top:1px solid #E68B2C"></div>
<div class="abs btab" style="left:200px;top:572.5px;letter-spacing:-.12px">Quellcode</div>
<div class="abs" style="left:256px;top:568px;width:41px;height:19px;background:#FBFAF6;border:1px solid #A5A293;border-left:0;border-top-color:#C5C2B2;border-radius:0 3px 0 0"></div>
<div class="abs btab" style="left:260px;top:570.5px;letter-spacing:-.15px">Design</div>
<svg width="0" height="0" class="abs"><defs>
<radialGradient id="dg" cx=".45" cy=".4" r=".6"><stop offset="0" stop-color="#D41CD4"/><stop offset="1" stop-color="#7E007E"/></radialGradient>
<linearGradient id="ig" x1="0" y1="0" x2="1" y2="1"><stop offset="0" stop-color="#fff"/><stop offset=".45" stop-color="#E6E6E6"/><stop offset="1" stop-color="#8E8E8E"/></linearGradient><linearGradient id="lk" x1="0" y1="0" x2="1" y2="1"><stop offset="0" stop-color="#E4EAF4"/><stop offset="1" stop-color="#8FA0C0"/></linearGradient>
<linearGradient id="pk" x1="0" y1="0" x2="1" y2="1"><stop offset="0" stop-color="#FF8CF0"/><stop offset="1" stop-color="#B030B0"/></linearGradient>
</defs></svg>
<svg class="abs" style="left:203px;top:135px" width="12" height="11" viewBox="0 0 12 11"><path d="M6 0L11.500 5.300L6 10.600L0.500 5.300Z" fill="url(#dg)"/><path d="M0.500 5.800L6 11" stroke="#fff" stroke-width=".8" fill="none"/></svg>
<svg class="abs" style="left:199px;top:138px" width="6" height="6" viewBox="0 0 6 6"><path d="M0 0.500H5M1 2.500H5M0 4.500H5" stroke="#C8CC7A"/></svg>
<svg class="abs" style="left:203px;top:255px" width="12" height="11" viewBox="0 0 12 11"><path d="M6 0L11.500 5.300L6 10.600L0.500 5.300Z" fill="url(#dg)"/><path d="M0.500 5.800L6 11" stroke="#fff" stroke-width=".8" fill="none"/></svg>
<svg class="abs" style="left:198px;top:261px" width="9" height="10" viewBox="0 0 9 10"><path d="M2.500 4V2.500Q2.500 1 4.500 1Q6.500 1 6.500 2.500V4" fill="none" stroke="#8C9AB4" stroke-width="1.200"/><rect x="0.800" y="3.300" width="7.400" height="6.200" rx="1.200" fill="url(#lk)" stroke="#7F8DAA" stroke-width=".8"/><path d="M2.500 5.500H6.500L4.500 7.800Z" fill="#111"/></svg>
<svg class="abs" style="left:203px;top:270px" width="12" height="11" viewBox="0 0 12 11"><path d="M6 0L11.500 5.300L6 10.600L0.500 5.300Z" fill="url(#dg)"/><path d="M0.500 5.800L6 11" stroke="#fff" stroke-width=".8" fill="none"/></svg>
<svg class="abs" style="left:198px;top:276px" width="9" height="10" viewBox="0 0 9 10"><path d="M2.500 4V2.500Q2.500 1 4.500 1Q6.500 1 6.500 2.500V4" fill="none" stroke="#8C9AB4" stroke-width="1.200"/><rect x="0.800" y="3.300" width="7.400" height="6.200" rx="1.200" fill="url(#lk)" stroke="#7F8DAA" stroke-width=".8"/><path d="M2.500 5.500H6.500L4.500 7.800Z" fill="#111"/></svg>
<svg class="abs" style="left:203px;top:315px" width="12" height="11" viewBox="0 0 12 11"><path d="M6 0L11.500 5.300L6 10.600L0.500 5.300Z" fill="url(#dg)"/><path d="M0.500 5.800L6 11" stroke="#fff" stroke-width=".8" fill="none"/></svg>
<svg class="abs" style="left:198px;top:321px" width="9" height="10" viewBox="0 0 9 10"><path d="M2.500 4V2.500Q2.500 1 4.500 1Q6.500 1 6.500 2.500V4" fill="none" stroke="#8C9AB4" stroke-width="1.200"/><rect x="0.800" y="3.300" width="7.400" height="6.200" rx="1.200" fill="url(#lk)" stroke="#7F8DAA" stroke-width=".8"/><path d="M2.500 5.500H6.500L4.500 7.800Z" fill="#111"/></svg>
<svg class="abs" style="left:198px;top:210px" width="16" height="16" viewBox="0 0 16 16"><path d="M5 5V3Q5 1 8 1Q11 1 11 3V5" fill="none" stroke="#9098A0" stroke-width="1.600"/><rect x="1.500" y="4.500" width="13" height="10.500" fill="#C9CDD4" stroke="#6E747C"/><path d="M14.500 5V15" stroke="#3E444C" stroke-width="1.4"/><path d="M10.500 3.500L14 9.500L10.500 15L6.800 9.500Z" fill="url(#pk)"/><rect x="1" y="6" width="6" height="8.500" rx="1" fill="url(#lk)" stroke="#7F8DAA" stroke-width=".8"/><path d="M2.200 9.500H5.800L4 11.800Z" fill="#111"/><path d="M2.500 7.500Q4 6 5.500 7.500" stroke="#6A748A" fill="none"/></svg>
</div>
<div id="rp">
<div class="abs" style="left:950px;top:74px;width:1px;height:515px;background:#ACA899"></div>
<div class="abs" style="left:951px;top:74px;width:26px;height:18px;border-bottom:1px solid #ACA899"><span class="abs" style="left:5.500px;top:4px;font-size:10.500px;white-space:nowrap;letter-spacing:-.45px">Eigenschaften</span></div>
<div class="abs box" style="left:950px;top:92px;width:31px;height:21px"></div>
<div class="abs" style="left:952px;top:115px;width:23px;height:22px;border:1px solid #98B5E2;border-radius:3px;background:linear-gradient(#FBFBF9,#ECE9D8)"><svg class="abs" style="left:2px;top:2px" width="18" height="17" viewBox="0 0 18 17"><g fill="#fff" stroke="#5E7DA8"><rect x="0.5" y="0.5" width="6" height="6"/><rect x="0.5" y="9.5" width="6" height="6"/></g><path d="M2 3.5H5M3.5 2V5M2 12.5H5M3.5 11V14" stroke="#000"/><path d="M8 2.5H11M8 5.5H11M12 5.5H15M8 7.5H11M12 7.5H15M8 11.5H11M8 14.5H11M12 14.5H15" stroke="#666" /></svg></div>
<div class="abs box" style="left:950px;top:139px;width:31px;height:390px;border-color:#A5A292"></div>
<div class="abs" style="left:950px;top:532px;width:31px;height:60px;border:1px solid #A5A292"></div>
</div>
<div id="dlg" class="abs"><div id="dlgt" class="abs"></div><div id="dlgb" class="abs"></div>
<div id="dlgx" class="abs"><svg class="abs" style="left:3px;top:3px" width="12" height="12" viewBox="0 0 12 12"><path d="M1.5 1.5L10.5 10.5M10.5 1.5L1.5 10.5" stroke="#fff" stroke-width="2.2" fill="none"/></svg></div>
<div class="abs" style="left:17px;top:41px;font-size:11px;white-space:nowrap;letter-spacing:.19px">Startzeit: 11:26:23</div>
<div id="ok" class="abs">OK</div></div>
</body>
</html>
